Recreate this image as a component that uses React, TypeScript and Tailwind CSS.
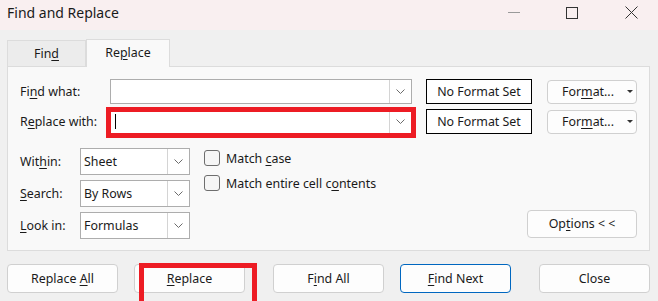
import React from "react";

const U = ({ children }: { children: React.ReactNode }) => (
  <span className="underline underline-offset-2">{children}</span>
);

function Chevron() {
  return (
    <svg width="9" height="5" viewBox="0 0 9 5" fill="none">
      <path d="M0.5 0.5L4.5 4.5L8.5 0.5" stroke="#6b6b6b" strokeWidth="1" />
    </svg>
  );
}

function ComboInput({ caret }: { caret?: boolean }) {
  return (
    <div className="flex h-[25px] w-[302px] border border-[#adadad] bg-white">
      <div className="flex flex-1 items-center pl-[4px]">
        {caret && <div className="h-[15px] w-px bg-black" />}
      </div>
      <div className="flex w-[22px] items-center justify-center border-l border-[#d4d4d4]">
        <Chevron />
      </div>
    </div>
  );
}

function Select({ value }: { value: string }) {
  return (
    <div className="flex h-[27px] w-[110px] border border-[#adadad] bg-white">
      <div className="flex flex-1 items-center pl-[3px] pt-px text-[12.4px] text-[#1a1a1a]">{value}</div>
      <div className="flex w-[22px] items-center justify-center border-l border-[#d4d4d4]">
        <Chevron />
      </div>
    </div>
  );
}

function Check({ children }: { children: React.ReactNode }) {
  return (
    <div className="flex h-[16px] items-center gap-[6px]">
      <div className="h-[16px] w-[16px] rounded-[3px] border border-[#6e6e6e] bg-[#f6f6f6]" />
      <span className="pt-[2px] text-[12.4px] text-[#1a1a1a]">{children}</span>
    </div>
  );
}

function FormatBtn() {
  return (
    <div className="relative flex h-[24px] w-[90px] items-center justify-center rounded-[4px] border border-[#d0d0d0] bg-[#fdfdfd] pr-[8px] text-[12.4px] text-[#1a1a1a]">
      <span className="pt-px">
        For<U>m</U>at...
      </span>
      <span className="absolute right-[3px] top-[9px] h-0 w-0 border-x-[3px] border-t-[3px] border-x-transparent border-t-[#333]" />
    </div>
  );
}

function NoFormat() {
  return (
    <div className="flex h-[25px] w-[106px] items-center justify-center border border-black bg-white pt-px text-[12.4px] text-[#1a1a1a]">
      No Format Set
    </div>
  );
}

function Btn({ children, primary }: { children: React.ReactNode; primary?: boolean }) {
  return (
    <div
      className={
        "flex h-[29px] w-[111px] items-center justify-center rounded-[4px] border bg-[#fdfdfd] text-[12.4px] text-[#1a1a1a] " +
        (primary ? "border-[#0067c0]" : "border-[#d0d0d0]")
      }
    >
      <span className="pt-px">{children}</span>
    </div>
  );
}

export default function App() {
  return (
    <div
      className="relative h-[301px] w-[658px] overflow-hidden bg-[#f0f0f0] text-[#1a1a1a]"
      style={{ fontFamily: '"Noto Sans", "Open Sans", sans-serif' }}
    >
      {/* title bar */}
      <div className="flex h-[30px] items-center bg-[#f9eff0] pb-[5px] pl-[7px]">
        <span className="text-[14px] text-[#1a1a1a]">Find and Replace</span>
        <div className="ml-auto flex items-center">
          <div className="mr-[46px] h-px w-[12px] bg-[#9a9a9a]" />
          <div className="mr-[47px] h-[12px] w-[12px] border border-[#333]" />
          <svg width="13" height="13" viewBox="0 0 13 13" className="mr-[20px]">
            <path d="M0.5 0.5L12.5 12.5M12.5 0.5L0.5 12.5" stroke="#333" strokeWidth="1" />
          </svg>
        </div>
      </div>

      {/* tabs */}
      <div className="mt-[9px] flex items-end pl-[7px]">
        <div className="flex h-[26px] w-[79px] items-center justify-center border border-b-0 border-[#dcdcdc] bg-[#ececec] pt-[2px] text-[12.4px]">
          <span>
            Fin<U>d</U>
          </span>
        </div>
        <div className="relative z-10 -mb-px flex h-[28px] w-[84px] items-center justify-center border border-b-0 border-[#dcdcdc] bg-[#f9f9f9] text-[12.4px]">
          <span>
            Re<U>p</U>lace
          </span>
        </div>
      </div>

      {/* panel */}
      <div className="relative ml-[7px] h-[185px] w-[643px] border border-[#dcdcdc] bg-[#f9f9f9] pl-[12px] pt-[12px] text-[12.4px]">
        <div className="flex h-[25px] items-center">
          <span className="w-[90px] pt-[2px]">
            Fi<U>n</U>d what:
          </span>
          <ComboInput />
          <div className="ml-[14px]">
            <NoFormat />
          </div>
          <div className="ml-[15px]">
            <FormatBtn />
          </div>
        </div>
        <div className="mt-[5px] flex h-[25px] items-center">
          <span className="w-[90px] pt-[2px]">
            R<U>e</U>place with:
          </span>
          <div className="relative">
            <ComboInput caret />
            <div className="pointer-events-none absolute -left-[4px] -top-[2px] h-[31px] w-[310px] border-[5px] border-[#ed1c24]" />
          </div>
          <div className="ml-[14px]">
            <NoFormat />
          </div>
          <div className="ml-[15px]">
            <FormatBtn />
          </div>
        </div>

        <div className="mt-[14px] flex">
          <div className="flex flex-col gap-[5px]">
            <div className="flex items-center">
              <span className="w-[60px] pt-[2px]">
                Wit<U>h</U>in:
              </span>
              <Select value="Sheet" />
            </div>
            <div className="flex items-center">
              <span className="w-[60px] pt-[2px]">
                <U>S</U>earch:
              </span>
              <Select value="By Rows" />
            </div>
            <div className="flex items-center">
              <span className="w-[60px] pt-[2px]">
                <U>L</U>ook in:
              </span>
              <Select value="Formulas" />
            </div>
          </div>
          <div className="ml-[14px] mt-[2px] flex flex-col gap-[9px]">
            <Check>
              Match <U>c</U>ase
            </Check>
            <Check>
              Match entire cell c<U>o</U>ntents
            </Check>
          </div>
          <div className="ml-auto mr-[12px] flex flex-col justify-end pb-[1px]">
            <div className="flex h-[28px] w-[110px] items-center justify-center rounded-[4px] border border-[#d0d0d0] bg-[#fdfdfd]">
              <span className="pt-px">
                Op<U>t</U>ions &lt; &lt;
              </span>
            </div>
          </div>
        </div>
      </div>

      {/* bottom buttons */}
      <div className="mt-[13px] flex pl-[7px]">
        <Btn>
          Replace <U>A</U>ll
        </Btn>
        <div className="relative ml-[16px]">
          <Btn>
            <U>R</U>eplace
          </Btn>
          <div className="pointer-events-none absolute -top-[1px] left-[5px] h-[45px] w-[118px] border-[5px] border-[#ed1c24]" />
        </div>
        <div className="ml-[28px]">
          <Btn>
            F<U>i</U>nd All
          </Btn>
        </div>
        <div className="ml-[16px]">
          <Btn primary>
            <U>F</U>ind Next
          </Btn>
        </div>
        <div className="ml-[28px]">
          <Btn>Close</Btn>
        </div>
      </div>
    </div>
  );
}
